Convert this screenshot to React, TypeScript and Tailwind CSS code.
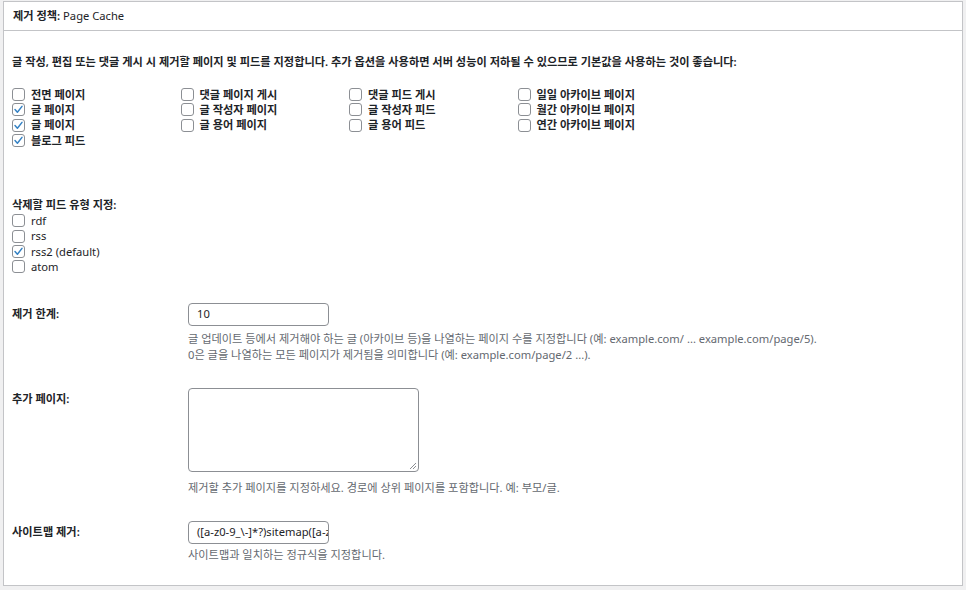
import React from "react";

const FONT = { fontFamily: '"Noto Sans", "Noto Sans CJK KR", sans-serif' };

function Box({ checked }: { checked?: boolean }) {
  return (
    <span className="inline-flex h-[13px] w-[13px] shrink-0 items-center justify-center rounded-[3px] border border-[#8c8f94] bg-white">
      {checked && (
        <svg width="11" height="11" viewBox="0 0 11 11">
          <path d="M2 5.6 L4.4 8.2 L9 2.4" fill="none" stroke="#3582c4" strokeWidth="1.5" strokeLinecap="round" strokeLinejoin="round" />
        </svg>
      )}
    </span>
  );
}

function Check({ label, checked }: { label: string; checked?: boolean }) {
  return (
    <div className="flex h-[15.33px] items-center gap-[6px] font-semibold">
      <Box checked={checked} />
      <span>{label}</span>
    </div>
  );
}

function FeedCheck({ label, checked }: { label: string; checked?: boolean }) {
  return (
    <div className="flex h-[15.33px] items-center gap-[6px]">
      <Box checked={checked} />
      <span>{label}</span>
    </div>
  );
}

const cols: [string, boolean][][] = [
  [["전면 페이지", false], ["글 페이지", true], ["글 페이지", true], ["블로그 피드", true]],
  [["댓글 페이지 게시", false], ["글 작성자 페이지", false], ["글 용어 페이지", false]],
  [["댓글 피드 게시", false], ["글 작성자 피드", false], ["글 용어 피드", false]],
  [["일일 아카이브 페이지", false], ["월간 아카이브 페이지", false], ["연간 아카이브 페이지", false]],
];

export default function App() {
  return (
    <div className="h-[590px] w-[966px] bg-[#f0f0f1] px-[3px] pt-px text-[11.2px] text-[#1d2327]" style={FONT}>
      <div className="h-[585px] border border-[#c3c4c7] bg-white">
        <div className="flex h-[29px] items-center border-b border-[#c3c4c7] px-[9px] leading-[16px]">
          <span className="font-semibold">제거 정책:</span>
          <span>&nbsp;Page Cache</span>
        </div>
        <div className="px-[8px] pt-[23px] leading-[16px]">
          <p className="font-semibold">
            글 작성, 편집 또는 댓글 게시 시 제거할 페이지 및 피드를 지정합니다. 추가 옵션을 사용하면 서버 성능이 저하될 수 있으므로 기본값을 사용하는 것이 좋습니다:
          </p>
          <div className="mt-[17px] flex">
            {cols.map((c, i) => (
              <div key={i} className="w-[168.5px]">
                {c.map(([l, ch], j) => (
                  <Check key={j} label={l} checked={ch} />
                ))}
              </div>
            ))}
          </div>
          <p className="mt-[49px] font-semibold">삭제할 피드 유형 지정:</p>
          <div>
            <FeedCheck label="rdf" />
            <FeedCheck label="rss" />
            <FeedCheck label="rss2 (default)" checked />
            <FeedCheck label="atom" />
          </div>

          <div className="mt-[28px] flex">
            <div className="w-[176px] pt-[3px] font-semibold">제거 한계:</div>
            <div>
              <div className="flex h-[23px] w-[141px] items-center rounded-[4px] border border-[#8c8f94] px-[8px]">10</div>
              <p className="mt-[5px] text-[#646970]">
                글 업데이트 등에서 제거해야 하는 글 (아카이브 등)을 나열하는 페이지 수를 지정합니다 (예: example.com/ ... example.com/page/5).
                <br />
                0은 글을 나열하는 모든 페이지가 제거됨을 의미합니다 (예: example.com/page/2 ...).
              </p>
            </div>
          </div>

          <div className="mt-[25px] flex">
            <div className="w-[176px] pt-[3px] font-semibold">추가 페이지:</div>
            <div>
              <div className="relative h-[84px] w-[231px] rounded-[4px] border border-[#8c8f94]">
                <svg className="absolute bottom-[1px] right-[1px]" width="8" height="8" viewBox="0 0 8 8">
                  <path d="M7 1 L1 7 M7 4 L4 7" stroke="#8c8f94" strokeWidth="1" />
                </svg>
              </div>
              <p className="mt-[8px] text-[#646970]">제거할 추가 페이지를 지정하세요. 경로에 상위 페이지를 포함합니다. 예: 부모/글.</p>
            </div>
          </div>

          <div className="mt-[25px] flex">
            <div className="w-[176px] pt-[3px] font-semibold">사이트맵 제거:</div>
            <div>
              <div className="flex h-[23px] w-[141px] items-center overflow-hidden whitespace-nowrap rounded-[4px] border border-[#8c8f94] px-[8px]">
                {"([a-z0-9_\\-]*?)sitemap([a-z0-9_\\-]*)?\\.xml"}
              </div>
              <p className="mt-[3px] text-[#646970]">사이트맵과 일치하는 정규식을 지정합니다.</p>
            </div>
          </div>
        </div>
      </div>
    </div>
  );
}
